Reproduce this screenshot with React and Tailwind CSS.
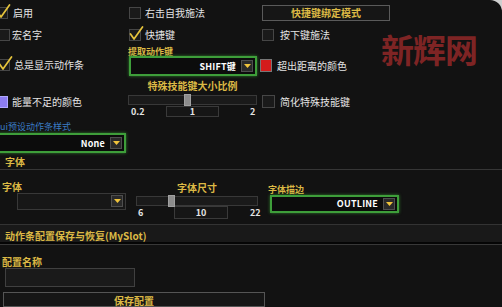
import React from "react";

function Check({ checked, className = "" }) {
  return (
    <div className={`relative w-[12px] h-[12px] shrink-0 border border-[#464646] bg-[#1a1a1a] ${className}`}>
      {checked && (
        <svg className="absolute -left-[1px] -top-[4px] w-[15px] h-[15px]" viewBox="0 0 15 15">
          <path d="M1.5 8 L5 13 L13.5 1" stroke="#e6c43c" strokeWidth="1.7" fill="none" strokeLinecap="round" strokeLinejoin="round" />
        </svg>
      )}
    </div>
  );
}

function Arrow() {
  return (
    <div className="w-[12px] h-[12px] shrink-0 mr-[2px] bg-[#2a2a2a] border border-[#4e4e4e] flex items-center justify-center">
      <svg className="w-[7px] h-[4px]" viewBox="0 0 7 4">
        <polygon points="0,0 7,0 3.5,4" fill="#f0c43c" />
      </svg>
    </div>
  );
}

function Dropdown({ text, className = "", green = true }) {
  return (
    <div
      className={`flex items-center ${
        green
          ? "bg-[#0c0c0c] border-2 border-[#3e9e3a] shadow-[0_0_3px_#2f7d2c]"
          : "border border-[#383838] bg-[#171717]"
      } ${className}`}
    >
      <span className="flex-1 text-right pr-[5px] font-bold text-[9px] text-white tracking-[0.2px]">{text}</span>
      <Arrow />
    </div>
  );
}

function Slider({ className = "", thumb }) {
  return (
    <div className={`relative h-[10px] border border-[#383838] bg-[#1a1a1a] ${className}`}>
      <div className="absolute -top-[2px] w-[7px] h-[12px] bg-[#8c8c8c] border border-[#a0a0a0]" style={{ left: thumb }} />
    </div>
  );
}

export default function App() {
  const gold = "text-[#dcb945]";
  return (
    <div className="relative w-[502px] h-[307px] overflow-hidden bg-[#121212] text-[10px] leading-none text-[#e4e4e4] font-['Noto_Sans_CJK_SC','Noto_Sans',sans-serif] flex flex-col">
      {/* Row 1 */}
      <div className="flex items-center h-[16px] mt-[5px]">
        <div className="w-[129px] flex items-center">
          <Check checked className="-ml-[4px]" />
          <span className="ml-[5px]">启用</span>
        </div>
        <div className="w-[133px] flex items-center">
          <Check />
          <span className="ml-[4px]">右击自我施法</span>
        </div>
        <div className={`w-[128px] h-[16px] border border-[#5a5a5a] bg-[#161616] flex items-center justify-center font-bold ${gold}`}>
          快捷键绑定模式
        </div>
      </div>

      {/* Row 2 */}
      <div className="flex items-center h-[14px] mt-[7px]">
        <div className="w-[129px] flex items-center">
          <Check className="-ml-[2px]" />
          <span className="ml-[2px]">宏名字</span>
        </div>
        <div className="w-[133px] flex items-center">
          <Check checked />
          <span className="ml-[4px]">快捷键</span>
        </div>
        <div className="flex items-center">
          <Check />
          <span className="ml-[6px]">按下键施法</span>
        </div>
      </div>

      {/* Row 3 */}
      <div className="flex mt-[6px]">
        <div className="w-[129px] flex items-center pt-[6px]">
          <Check checked className="-ml-[2px]" />
          <span className="ml-[4px]">总是显示动作条</span>
        </div>
        <div className="w-[131px] flex flex-col">
          <span className={`text-[9px] h-[9px] leading-[9px] -ml-[1px] font-bold ${gold}`}>提取动作键</span>
          <Dropdown text="SHIFT键" className="w-[128px] h-[20px]" />
        </div>
        <div className="flex items-center pt-[8px]">
          <div className="w-[12px] h-[13px] bg-[#d41c1c] border border-[#777]" />
          <span className="ml-[5px]">超出距离的颜色</span>
        </div>
      </div>

      {/* Row 4 */}
      <div className="flex mt-[5px]">
        <div className="w-[128px] flex items-center pt-[5px]">
          <div className="w-[12px] h-[12px] -ml-[4px] bg-[#8c7cf0] border border-[#b0a8ff]" />
          <span className="ml-[4px]">能量不足的颜色</span>
        </div>
        <div className="w-[134px] flex flex-col">
          <span className={`w-[129px] h-[11px] text-center font-bold ${gold}`}>特殊技能键大小比例</span>
          <Slider className="w-[129px] mt-[3px]" thumb="55px" />
          <div className="flex items-center h-[12px] w-[129px] text-[9px] font-bold">
            <span className="ml-[3px] w-[35px]">0.2</span>
            <div className="w-[53px] h-[11px] border border-[#3a3a3a] bg-[#161616] flex items-center justify-center">1</div>
            <span className="ml-[31px]">2</span>
          </div>
        </div>
        <div className="flex items-center pt-[5px]">
          <Check className="w-[13px] h-[13px]" />
          <span className="ml-[5px]">简化特殊技能键</span>
        </div>
      </div>

      {/* Row 5 */}
      <div className="flex flex-col mt-[5px] w-[130px]">
        <span className="text-[9px] h-[10px] text-[#3b7cc2]">ui预设动作条样式</span>
        <Dropdown text="None" className="w-[130px] h-[20px] mt-[1px] -ml-[4px]" />
      </div>

      {/* Section 字体 */}
      <div className={`mt-[3px] h-[14px] pl-[5px] flex items-center border-b border-[#363636] font-bold ${gold}`}>字体</div>

      {/* Font row */}
      <div className="flex h-[57px]">
        <div className="w-[136px] flex flex-col">
          <span className={`ml-[2px] mt-[12px] h-[10px] font-bold ${gold}`}>字体</span>
          <Dropdown green={false} text="" className="ml-[17px] mt-[1px] w-[109px] h-[17px]" />
        </div>
        <div className="w-[132px] flex flex-col">
          <span className={`w-[122px] mt-[13px] h-[10px] text-center font-bold ${gold}`}>字体尺寸</span>
          <Slider className="w-[122px] mt-[3px]" thumb="31px" />
          <div className="flex items-center h-[13px] text-[9px] font-bold">
            <span className="ml-[2px] w-[36px]">6</span>
            <div className="w-[54px] h-[13px] border border-[#3a3a3a] bg-[#161616] flex items-center justify-center">10</div>
            <span className="ml-[22px]">22</span>
          </div>
        </div>
        <div className="flex flex-col">
          <span className={`mt-[15px] h-[9px] text-[9px] font-bold ${gold}`}>字体描边</span>
          <Dropdown text="OUTLINE" className="ml-[2px] mt-[1px] w-[129px] h-[18px]" />
        </div>
      </div>

      {/* Section MySlot */}
      <div className={`h-[19px] border-t border-[#333] bg-[#191919] pl-[5px] flex items-end pb-[1px] font-bold ${gold}`}>
        动作条配置保存与恢复(MySlot)
      </div>
      <div className="h-[2px] bg-[#050505]" />
      <div className="h-[1px] bg-[#383838]" />

      <span className={`ml-[2px] mt-[12px] h-[10px] font-bold ${gold}`}>配置名称</span>
      <div className="ml-[5px] mt-[1px] w-[130px] h-[20px] border border-[#404040] bg-[#1a1a1a]" />
      <div className={`ml-[3px] mt-[5px] w-[262px] h-[16px] border border-[#555] bg-[#161616] flex justify-center pt-[3px] font-bold ${gold}`}>
        保存配置
      </div>

      {/* watermark */}
      <div className="absolute left-[381px] top-[33px] text-[33px] leading-none font-bold tracking-[-1px] text-[#7e2424]">
        新辉网
      </div>

      {/* top-right corner artifact */}
      <div className="absolute top-0 right-0 w-[12px] h-[12px] bg-[#cfcfcf] overflow-hidden">
        <div className="absolute -left-[12px] top-0 w-[24px] h-[24px] rounded-full bg-[#121212]" />
      </div>
    </div>
  );
}
